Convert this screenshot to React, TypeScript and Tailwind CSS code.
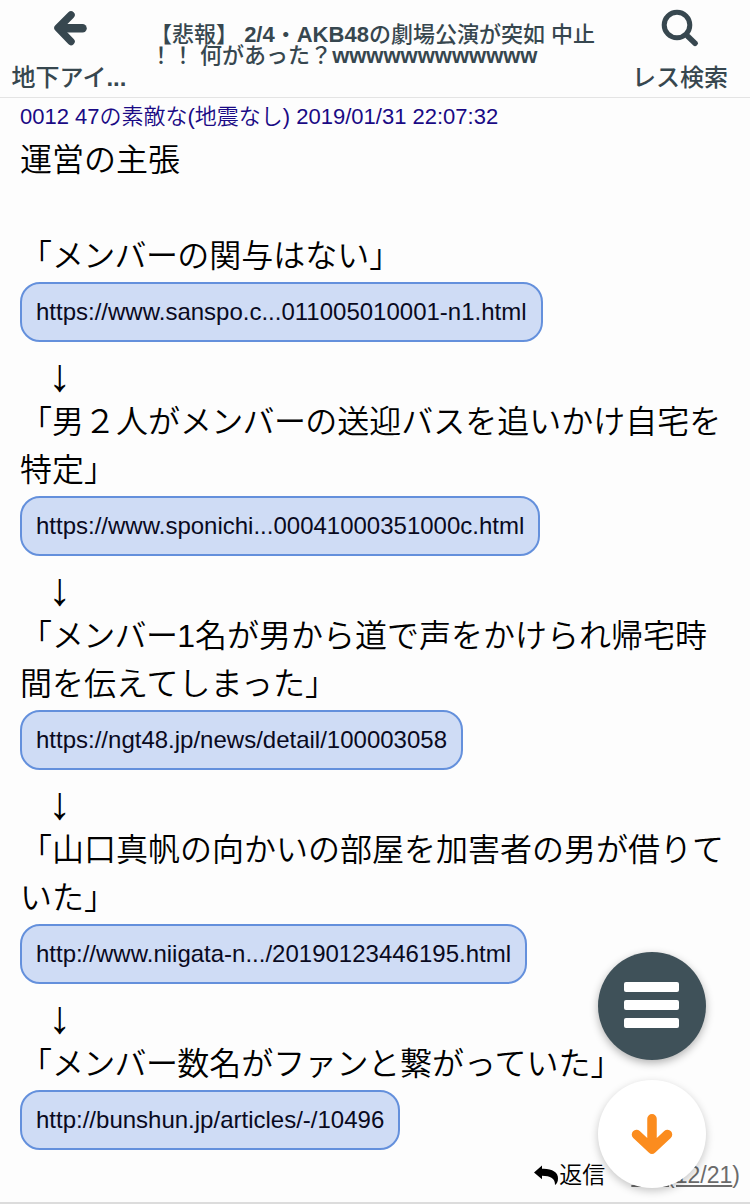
import type { ReactNode } from "react";

function Chip({ children }: { children: string }) {
  return (
    <div className="flex h-[70px] items-start pt-[2px]">
      <a className="flex h-[60px] items-center whitespace-nowrap rounded-[20px] border-2 border-[#6490dc] bg-[#cfdcf5] px-[14px] text-[24px] font-normal text-[#0a0a1e]">
        {children}
      </a>
    </div>
  );
}

function Line({ children }: { children?: ReactNode }) {
  return <p className="h-12 whitespace-pre text-[32px] leading-[48px]">{children}</p>;
}

function Member() {
  return <span className="tracking-[-0.7px]">メンバー</span>;
}

function Arrow() {
  return (
    <div className="flex h-12 items-center pl-[28px] pt-[2px]">
      <span className="text-[46px] leading-[42px]">↓</span>
    </div>
  );
}

export default function App() {
  return (
    <div className="relative flex h-[1204px] w-[750px] flex-col overflow-hidden bg-[#fdfdfd] font-['Liberation_Sans','Noto_Sans_CJK_JP',sans-serif] font-[350] text-black">
      <header className="flex h-[98px] shrink-0 justify-between border-b border-[#e4e4e4] font-medium text-[#37474f]">
        <div className="flex w-[138px] flex-col items-center pt-[11px]">
          <svg className="ml-[2px]" width="34" height="36" viewBox="0 0 34 36" fill="none" stroke="currentColor" strokeWidth="7.5" strokeLinecap="round" strokeLinejoin="round">
            <path d="M18 4 5 17 18 30.500" />
            <path d="M8 17.200h21.500" strokeWidth="8.500" />
          </svg>
          <span className="mt-[14px] whitespace-nowrap text-[24px] leading-[34px]">地下アイ<b>...</b></span>
        </div>
        <div className="flex w-[460px] flex-col pl-[6px] pt-[24px] text-[22px] leading-[21px]">
          <span className="whitespace-nowrap">
            【悲報】 <b>2/4</b>・<b>AKB48</b>の劇場公演が突如 中止
          </span>
          <span className="whitespace-nowrap">
            ！！ 何があった？<b>wwwwwwwwwwww</b>
          </span>
        </div>
        <div className="flex w-[140px] flex-col items-center pt-[9px]">
          <svg width="38" height="38" viewBox="0 0 38 38" fill="none" stroke="currentColor" strokeWidth="5" strokeLinecap="round">
            <circle cx="16" cy="16" r="12.800" />
            <path d="m27 27.500 7 6.800" strokeWidth="5.500" />
          </svg>
          <span className="mt-[14px] whitespace-nowrap text-[24px] leading-[34px]">レス検索</span>
        </div>
      </header>

      <main className="flex flex-1 flex-col px-5">
        <div className="h-[38px] whitespace-nowrap text-[22px] leading-[38px] text-[#1a0a85]">
          0012 47の素敵な(地震なし) 2019/01/31 22:07:32
        </div>
        <Line>運営の主張</Line>
        <Line />
        <Line>「<Member />の関与はない」</Line>
        <Chip>https://www.sanspo.c...011005010001-n1.html</Chip>
        <Arrow />
        <Line>「男２人が<Member />の送迎バスを追いかけ自宅を</Line>
        <Line>特定」</Line>
        <Chip>https://www.sponichi...00041000351000c.html</Chip>
        <Arrow />
        <Line>「<Member />1名が男から道で声をかけられ帰宅時</Line>
        <Line>間を伝えてしまった」</Line>
        <Chip>https://ngt48.jp/news/detail/100003058</Chip>
        <Arrow />
        <Line>「山口真帆の向かいの部屋を加害者の男が借りて</Line>
        <Line>いた」</Line>
        <Chip>http://www.niigata-n.../20190123446195.html</Chip>
        <Arrow />
        <Line>「<Member />数名が<span className="tracking-[-0.4px]">ファン</span>と繋がっていた」</Line>
        <Chip>http://bunshun.jp/articles/-/10496</Chip>
        <footer className="-mr-[10px] flex h-[34px] items-center justify-end text-[23px] leading-[34px]">
          <svg width="25" height="21" viewBox="0 0 25 21" fill="currentColor">
            <path d="M0 7.500 8 .500v3.300c9.500-.500 16.500 3.500 16 9.700 0 3-1.200 5.500-3 6.500.300-6.500-4.500-9.200-13-9.200v3.400z" />
          </svg>
          <span>返信</span>
          <span className="ml-[26px] whitespace-pre text-[#6b6b6b]"><span className="underline">ID: (12/21</span>)</span>
        </footer>
      </main>
      <div className="h-[2px] shrink-0 bg-[#dcdcdc]" />

      <button className="absolute left-[598px] top-[952px] flex h-[108px] w-[108px] flex-col items-center justify-center gap-[8px] rounded-full bg-[#3f5159] pb-[2px] pr-[1px] shadow-[0_3px_8px_rgba(0,0,0,0.3)]">
        <span className="h-[10px] w-[55px] rounded-[2px] bg-white" />
        <span className="h-[10px] w-[55px] rounded-[2px] bg-white" />
        <span className="h-[10px] w-[55px] rounded-[2px] bg-white" />
      </button>
      <button className="absolute left-[598px] top-[1080px] flex h-[108px] w-[108px] items-center justify-center rounded-full bg-white pr-[1px] text-[#fb8c1e] shadow-[0_3px_8px_rgba(0,0,0,0.22)]">
        <svg width="42" height="42" viewBox="0 0 42 42" fill="none" stroke="currentColor" strokeWidth="9.500" strokeLinecap="round" strokeLinejoin="round">
          <path d="M21 5.800v28M5.500 21.500 21 36l15.500-14.500" />
        </svg>
      </button>
    </div>
  );
}
